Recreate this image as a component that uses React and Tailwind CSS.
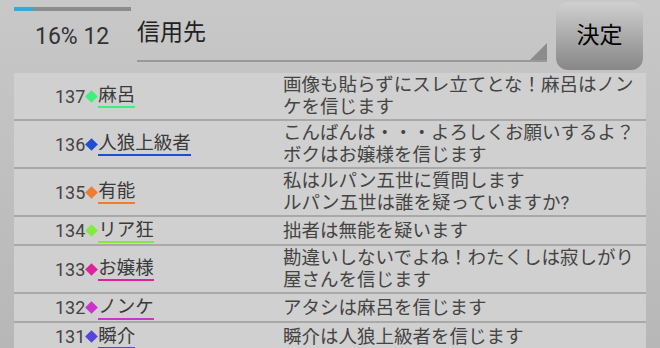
const posts = [
  { no: 137, name: "麻呂", color: "bg-[#3cf07c]", line: "border-[#3cf07c]", text: "画像も貼らずにスレ立てとな！麻呂はノン\nケを信じます" },
  { no: 136, name: "人狼上級者", color: "bg-[#1f4fd0]", line: "border-[#1f4fd0]", text: "こんばんは・・・よろしくお願いするよ？\nボクはお嬢様を信じます" },
  { no: 135, name: "有能", color: "bg-[#f07c30]", line: "border-[#f07c30]", text: "私はルパン五世に質問します\nルパン五世は誰を疑っていますか?" },
  { no: 134, name: "リア狂", color: "bg-[#84ea40]", line: "border-[#84ea40]", text: "拙者は無能を疑います" },
  { no: 133, name: "お嬢様", color: "bg-[#e0229a]", line: "border-[#e0229a]", text: "勘違いしないでよね！わたくしは寂しがり\n屋さんを信じます" },
  { no: 132, name: "ノンケ", color: "bg-[#cc33cc]", line: "border-[#cc33cc]", text: "アタシは麻呂を信じます" },
  { no: 131, name: "瞬介", color: "bg-[#5544dd]", line: "border-[#5544dd]", text: "瞬介は人狼上級者を信じます" },
]

const Header = () => {
  return (
    <div className="flex h-[73px]">
      <div className="w-[137px] shrink-0">
        <div className="ml-[14px] mt-[7px] h-[4px] w-[117px] bg-[#8c8c8c]">
          <div className="h-full w-[19px] bg-[#34a9dc]" />
        </div>
        <div className="mt-[12px] pl-[35px] text-[23px] leading-[27px] text-[#333]">
          16% 12
        </div>
      </div>

      <div className="relative mt-[16px] h-[46px] w-[410px] border-b-2 border-[#999]">
        <div className="pt-[3px] text-[23px] leading-[27px] text-[#222]">信用先</div>
        <svg className="absolute right-0 bottom-0" width="17" height="17" viewBox="0 0 17 17">
          <polygon points="17,0 17,17 0,17" fill="#8c8c8c" />
        </svg>
      </div>

      <div className="ml-[9px] mt-[2px] flex h-[68px] w-[87px] items-center justify-center rounded-[12px] bg-gradient-to-b from-[#d0d0d0] to-[#878787] text-[23px] text-black">
        決定
      </div>
    </div>
  )
}

const Row = ({ post }) => {
  return (
    <div className="flex items-center border-b-2 border-[#a9a9a9]">
      <div className="flex w-[269px] shrink-0 items-center pl-[41px]">
        <span className="text-[18px] text-[#444]">{post.no}</span>
        <span className={`mx-[2px] h-[9px] w-[9px] rotate-45 ${post.color}`} />
        <span className={`border-b-2 text-[18.5px] leading-[22px] text-[#3a3a3a] ${post.line}`}>
          {post.name}
        </span>
      </div>
      <div className="flex-1 whitespace-pre-line py-px text-[18.5px] leading-[22px] text-[#444]">
        {post.text}
      </div>
    </div>
  )
}

export default function App() {
  return (
    <div className="h-[348px] w-[660px] overflow-hidden bg-gradient-to-b from-[#c8c8c8] to-[#b7b7b7] font-['Roboto','Noto_Sans_CJK_JP',sans-serif]">
      <Header />
      <div className="mx-[14px] bg-[#d0d0d0]">
        {posts.map((p) => (
          <Row key={p.no} post={p} />
        ))}
      </div>
    </div>
  )
}
